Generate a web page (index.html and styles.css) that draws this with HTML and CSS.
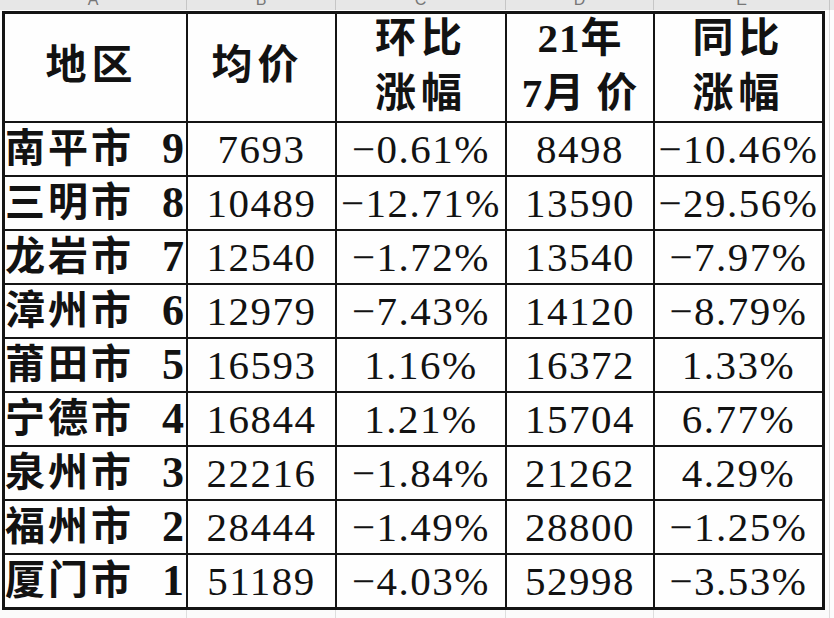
FILE: index.html
```html
<!DOCTYPE html>
<html lang="zh">
<head>
<meta charset="utf-8">
<title>福建各市房价</title>
<link rel="stylesheet" href="styles.css">
</head>
<body>
<div class="colhead">
  <span>A</span><span>B</span><span>C</span><span>D</span><span>E</span><span></span>
</div>
<div class="grid">
  <div class="cell hd">地区</div>
  <div class="cell hd">均价</div>
  <div class="cell hd two"><span>环比</span><span>涨幅</span></div>
  <div class="cell hd two tight"><span>21年</span><span>7月 价</span></div>
  <div class="cell hd two"><span>同比</span><span>涨幅</span></div>

  <div class="cell city"><span>南平市</span><b>9</b></div>
  <div class="cell">7693</div><div class="cell">−0.61%</div><div class="cell">8498</div><div class="cell">−10.46%</div>

  <div class="cell city"><span>三明市</span><b>8</b></div>
  <div class="cell">10489</div><div class="cell">−12.71%</div><div class="cell">13590</div><div class="cell">−29.56%</div>

  <div class="cell city"><span>龙岩市</span><b>7</b></div>
  <div class="cell">12540</div><div class="cell">−1.72%</div><div class="cell">13540</div><div class="cell">−7.97%</div>

  <div class="cell city"><span>漳州市</span><b>6</b></div>
  <div class="cell">12979</div><div class="cell">−7.43%</div><div class="cell">14120</div><div class="cell">−8.79%</div>

  <div class="cell city"><span>莆田市</span><b>5</b></div>
  <div class="cell">16593</div><div class="cell">1.16%</div><div class="cell">16372</div><div class="cell">1.33%</div>

  <div class="cell city"><span>宁德市</span><b>4</b></div>
  <div class="cell">16844</div><div class="cell">1.21%</div><div class="cell">15704</div><div class="cell">6.77%</div>

  <div class="cell city"><span>泉州市</span><b>3</b></div>
  <div class="cell">22216</div><div class="cell">−1.84%</div><div class="cell">21262</div><div class="cell">4.29%</div>

  <div class="cell city"><span>福州市</span><b>2</b></div>
  <div class="cell">28444</div><div class="cell">−1.49%</div><div class="cell">28800</div><div class="cell">−1.25%</div>

  <div class="cell city"><span>厦门市</span><b>1</b></div>
  <div class="cell">51189</div><div class="cell">−4.03%</div><div class="cell">52998</div><div class="cell">−3.53%</div>
</div>
<div class="footgrid">
  <span></span><span></span><span></span><span></span><span></span><span></span>
</div>
</body>
</html>
```
FILE: styles.css
```css
html, body {
  margin: 0;
  padding: 0;
}
body {
  width: 834px;
  height: 618px;
  overflow: hidden;
  background: #fdfdfd linear-gradient(#dcdcdc, #dcdcdc) no-repeat 829px 0 / 1px 100%;
  font-family: "Liberation Serif", "Noto Sans CJK SC", serif;
  color: #121212;
}
.colhead {
  display: grid;
  grid-template-columns: 186px 148px 169px 147px 175px 1fr;
  column-gap: 1px;
  background: #c6c6c6;
  height: 10px;
  margin-bottom: 1px;
}
.colhead span {
  background: #e7e7e7;
  overflow: hidden;
  text-align: center;
  font-family: "Liberation Sans", sans-serif;
  font-size: 16px;
  line-height: 0;
  color: #777;
}
.grid {
  display: grid;
  grid-template-columns: 181px 147px 168px 146px 167px;
  grid-template-rows: 107px repeat(9, 52px);
  gap: 2px;
  padding: 3px;
  background: #141414;
  width: max-content;
  margin-left: 2px;
}
.cell {
  background: #fefefe;
  display: flex;
  align-items: center;
  justify-content: center;
  font-size: 41px;
  letter-spacing: 1.5px;
  line-height: 1;
  white-space: nowrap;
}
.hd {
  flex-direction: column;
  font-weight: 700;
  font-size: 41px;
  letter-spacing: 5px;
  line-height: 55px;
  padding-right: 8px;
  padding-bottom: 4px;
}
.two {
  padding-right: 0;
}
.tight {
  letter-spacing: 1px;
}
.city {
  justify-content: space-between;
  padding-right: 2px;
}
.city span {
  font-weight: 700;
  font-size: 40px;
  letter-spacing: 3px;
}
.city b {
  font-weight: 700;
  font-size: 44px;
  letter-spacing: 0;
}
.footgrid {
  display: grid;
  grid-template-columns: 186px 148px 169px 147px 175px 1fr;
  column-gap: 1px;
  background: #dedede;
  height: 12px;
}
.footgrid span {
  background: #fbfbfb;
}
```
